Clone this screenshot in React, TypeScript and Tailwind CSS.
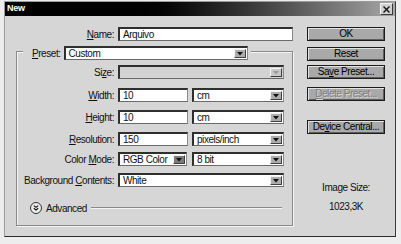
import { ReactNode } from 'react';

const font = { fontFamily: '"Liberation Sans", Arial, sans-serif' };

function Label({ text, u, width = 'w-[98px]' }: { text: string; u: number; width?: string }) {
  return (
    <div className={`${width} shrink-0 text-right pr-[1px]`}>
      {text.slice(0, u)}
      <span className="underline underline-offset-1">{text[u]}</span>
      {text.slice(u + 1)}
    </div>
  );
}

function Arrow({ dark = false, disabled = false }: { dark?: boolean; disabled?: boolean }) {
  return (
    <div
      className={`w-[12px] h-full flex items-center justify-center border-t border-l border-[#f4f4f4] border-r border-b border-r-[#404040] border-b-[#404040] ${
        dark ? 'bg-[#7a7a7a]' : disabled ? 'bg-[#c8c8c8]' : 'bg-[#acacac]'
      }`}
    >
      <svg width="6" height="4" viewBox="0 0 6 4">
        <path d="M0 0h6L3 3.5z" fill={disabled ? '#9a9a9a' : '#111'} />
      </svg>
    </div>
  );
}

function Field({ value, w, select, dark, disabled }: { value?: string; w: string; select?: boolean; dark?: boolean; disabled?: boolean }) {
  return (
    <div
      className={`${w} h-[14px] shrink-0 flex items-stretch border-t-2 border-l-2 border-[#2e2e2e] border-r border-b border-r-[#8a8a8a] border-b-[#6a6a6a] ${
        disabled ? 'bg-[#d2d2d2]' : 'bg-white'
      }`}
    >
      <div className="flex-1 pl-[3px] leading-[11px] overflow-hidden whitespace-nowrap">{value}</div>
      {select && (
        <div className="p-[1px]">
          <Arrow dark={dark} disabled={disabled} />
        </div>
      )}
    </div>
  );
}

function Row({ children, className = '' }: { children: ReactNode; className?: string }) {
  return <div className={`flex items-center h-[14px] ${className}`}>{children}</div>;
}

function Btn({ children, className = '', disabled }: { children: ReactNode; className?: string; disabled?: boolean }) {
  return (
    <div
      className={`w-[78px] h-[14px] flex items-center justify-center bg-[#a9a9a9] border border-[#1c1c1c] shadow-[inset_1px_1px_0_#e2e2e2,inset_-1px_-1px_0_#5e5e5e] leading-none ${
        disabled ? 'text-[#7e7e7e] [text-shadow:1px_1px_0_#d8d8d8]' : 'text-black'
      } ${className}`}
    >
      {children}
    </div>
  );
}

export default function App() {
  return (
    <div className="w-[401px] h-[244px] bg-[#ededed] pt-[1px] pl-[4px] text-[10px] tracking-[-0.45px] text-[#111]" style={font}>
      <div className="w-[392px] h-[236px] flex flex-col bg-[#d6d6d6] border-l border-t border-[#9c9c9c] border-r border-b border-r-[#3a3a3a] border-b-[#2a2a2a]">
        {/* title bar */}
        <div className="h-[14px] flex items-center justify-between bg-linear-to-r from-black from-30% to-[#a8a8a8] pl-[2px] pr-[2px]">
          <span className="text-white font-bold text-[9px] tracking-[-0.3px]">New</span>
          <div className="w-[13px] h-[12px] bg-[#d0d0d0] border-t border-l border-[#f4f4f4] border-r border-b border-r-[#3a3a3a] border-b-[#3a3a3a] flex items-center justify-center">
            <svg width="7" height="7" viewBox="0 0 7 7">
              <path d="M0.5 0.5l6 6M6.5 0.5l-6 6" stroke="#111" strokeWidth="1.4" />
            </svg>
          </div>
        </div>

        <div className="flex-1 flex pt-[11px]">
          {/* left column */}
          <div className="w-[288px] pl-[11px] flex flex-col">
            <Row>
              <Label text="Name:" u={0} width="w-[99px]" />
              <div className="w-[3px]" />
              <Field value="Arquivo" w="w-[175px]" />
            </Row>

            <div className="mt-[10px] w-[277px] h-[175px] border border-[#8a8a8a] shadow-[inset_1px_1px_0_#f4f4f4,1px_1px_0_#f4f4f4] flex flex-col">
              <Row className="-mt-[6px] ml-[6px] w-[228px] bg-[#d6d6d6]">
                <div className="pl-[9px] pr-[3px]">
                  <span className="underline underline-offset-1">P</span>reset:
                </div>
                <Field value="Custom" w="w-[184px]" select />
              </Row>

              <Row className="mt-[5px]">
                <Label text="Size:" u={2} />
                <div className="w-[3px]" />
                <Field w="w-[166px]" select disabled />
              </Row>
              <Row className="mt-[9px]">
                <Label text="Width:" u={0} />
                <div className="w-[3px]" />
                <Field value="10" w="w-[70px]" />
                <div className="w-[4px]" />
                <Field value="cm" w="w-[92px]" select />
              </Row>
              <Row className="mt-[8px]">
                <Label text="Height:" u={0} />
                <div className="w-[3px]" />
                <Field value="10" w="w-[70px]" />
                <div className="w-[4px]" />
                <Field value="cm" w="w-[92px]" select />
              </Row>
              <Row className="mt-[8px]">
                <Label text="Resolution:" u={0} />
                <div className="w-[3px]" />
                <Field value="150" w="w-[70px]" />
                <div className="w-[4px]" />
                <Field value="pixels/inch" w="w-[92px]" select />
              </Row>
              <Row className="mt-[6px]">
                <Label text="Color Mode:" u={6} />
                <div className="w-[3px]" />
                <Field value="RGB Color" w="w-[69px]" select dark />
                <div className="w-[5px]" />
                <Field value="8 bit" w="w-[92px]" select />
              </Row>
              <Row className="mt-[7px]">
                <Label text="Background Contents:" u={11} />
                <div className="w-[3px]" />
                <Field value="White" w="w-[166px]" select />
              </Row>

              <div className="mt-[15px] h-[12px] flex items-center pl-[13px] pr-[10px]">
                <div className="w-[12px] h-[12px] rounded-full border border-[#333] bg-[#ececec] flex items-center justify-center">
                  <svg width="6" height="6" viewBox="0 0 6 6">
                    <path d="M0.8 0.6L3 2.4L5.2 0.6M0.8 3.2L3 5L5.2 3.2" fill="none" stroke="#111" strokeWidth="1.1" />
                  </svg>
                </div>
                <span className="ml-[4px]">Advanced</span>
                <div className="flex-1 ml-[4px] h-[2px] border-t border-[#8a8a8a] border-b border-b-[#f4f4f4]" />
              </div>
            </div>
          </div>

          {/* right column */}
          <div className="ml-[14px] w-[78px] flex flex-col">
            <Btn>OK</Btn>
            <Btn className="mt-[6px]">Reset</Btn>
            <Btn className="mt-[4px]">
              Sa<span className="underline underline-offset-1">v</span>e Preset...
            </Btn>
            <Btn className="mt-[8px]" disabled>
              <span className="underline underline-offset-1">D</span>elete Preset...
            </Btn>
            <Btn className="mt-[19px]">
              De<span className="underline underline-offset-1">v</span>ice Central...
            </Btn>
            <div className="mt-[48px] h-[12px] leading-[12px] text-center">Image Size:</div>
            <div className="mt-[7px] h-[12px] leading-[12px] text-center">1023,3K</div>
          </div>
        </div>
      </div>
    </div>
  );
}
